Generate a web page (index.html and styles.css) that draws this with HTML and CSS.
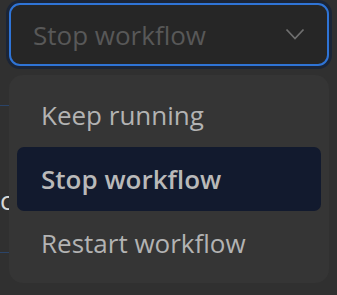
FILE: index.html
```html
<!DOCTYPE html>
<html>
<head>
<meta charset="utf-8">
<link rel="stylesheet" href="styles.css">
</head>
<body>
<div class="page">
  <div class="select">
    <span class="select-value">Stop workflow</span>
    <svg class="chevron" width="20" height="14" viewBox="0 0 20 14"><path d="M1.5 2.5 L10 11.5 L18.5 2.5" fill="none" stroke="#6f6f6f" stroke-width="1.8"/></svg>
  </div>
  <div class="behind">
    <div class="line"></div>
    <div class="label">c</div>
    <div class="line"></div>
  </div>
  <ul class="menu">
    <li class="item">Keep running</li>
    <li class="item active">Stop workflow</li>
    <li class="item">Restart workflow</li>
  </ul>
</div>
</body>
</html>
```
FILE: styles.css
```css
html, body {
  margin: 0;
  padding: 0;
  background: #303030;
  font-family: "Open Sans", "Noto Sans", sans-serif;
}
.page {
  position: relative;
  width: 337px;
  height: 295px;
  overflow: hidden;
}
.select {
  margin: 3px 0 0 9px;
  width: 320px;
  height: 63px;
  box-sizing: border-box;
  border: 2px solid #2f74d6;
  border-radius: 11px;
  background: #262626;
  box-shadow: 0 0 0 3px #1b2537;
  display: flex;
  align-items: center;
  justify-content: space-between;
  padding: 0 22px 0 22px;
}
.select-value {
  font-size: 26px;
  color: #585858;
}
.chevron {
  display: block;
  margin-top: -2px;
}
.behind {
  padding-top: 39px;
}
.line {
  width: 9px;
  height: 1px;
  background: #2b4468;
}
.label {
  margin: 77px 0 34px 0;
  font-size: 26px;
  line-height: 35px;
  color: #d8d8d8;
}
.menu {
  position: absolute;
  left: 9px;
  top: 75px;
  width: 320px;
  margin: 0;
  padding: 8px 8px;
  box-sizing: border-box;
  list-style: none;
  background: #353535;
  border-radius: 14px;
}
.item {
  height: 64px;
  display: flex;
  align-items: center;
  padding-left: 24px;
  font-size: 26px;
  color: #b3b3b3;
  border-radius: 7px;
}
.item.active {
  background: #121a2e;
  font-weight: 600;
  color: #b9b9b9;
}
```
